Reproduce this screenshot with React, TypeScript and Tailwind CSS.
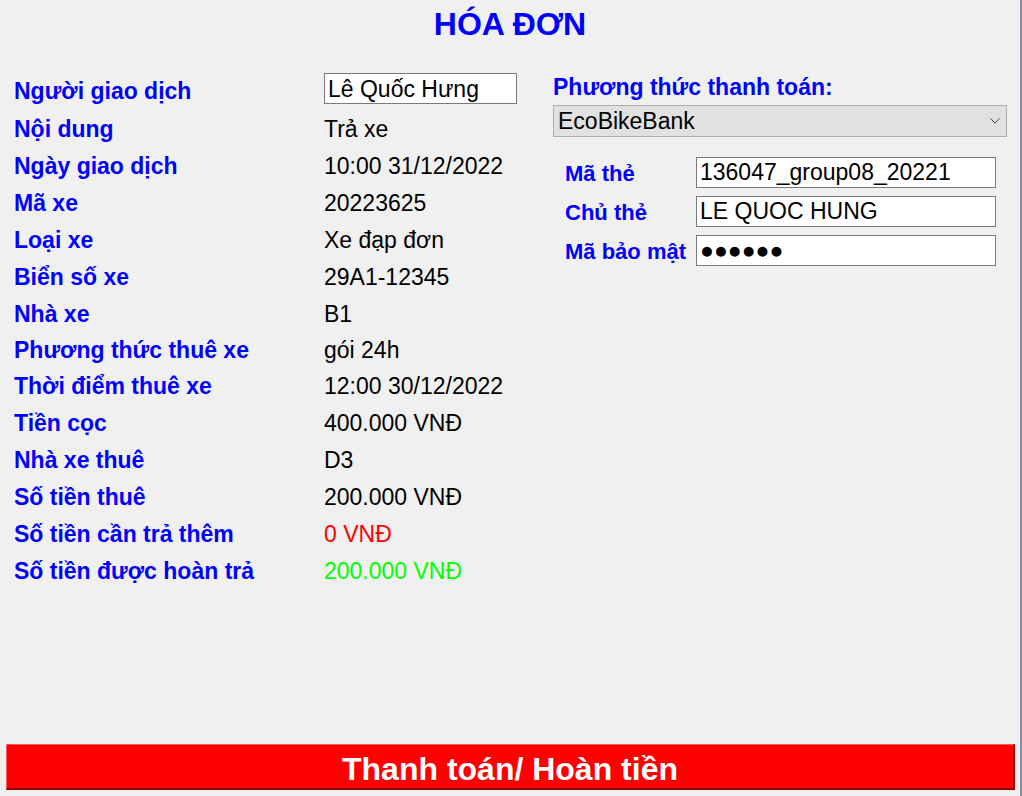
const rows: { label: string; value: string; color?: string; h?: string }[] = [
  { label: "Nội dung", value: "Trả xe" },
  { label: "Ngày giao dịch", value: "10:00 31/12/2022" },
  { label: "Mã xe", value: "20223625" },
  { label: "Loại xe", value: "Xe đạp đơn" },
  { label: "Biển số xe", value: "29A1-12345" },
  { label: "Nhà xe", value: "B1" },
  { label: "Phương thức thuê xe", value: "gói 24h", h: "short" },
  { label: "Thời điểm thuê xe", value: "12:00 30/12/2022" },
  { label: "Tiền cọc", value: "400.000 VNĐ" },
  { label: "Nhà xe thuê", value: "D3" },
  { label: "Số tiền thuê", value: "200.000 VNĐ" },
  { label: "Số tiền cần trả thêm", value: "0 VNĐ", color: "red" },
  { label: "Số tiền được hoàn trả", value: "200.000 VNĐ", color: "green" },
];

const InfoRow = ({ label, value, color, h }: (typeof rows)[number]) => {
  const rowClass =
    h === "short"
      ? "flex h-[35px] leading-[35px]"
      : "flex h-[37px] leading-[37px]";
  const valueClass =
    color === "red"
      ? "text-[23px] text-[#ff0000]"
      : color === "green"
      ? "text-[23px] text-[#00ff00]"
      : "text-[23px] text-black";
  return (
    <div className={rowClass}>
      <span className="w-[310px] shrink-0 text-[23px] font-bold text-[#0000ff]">
        {label}
      </span>
      <span className={valueClass}>{value}</span>
    </div>
  );
};

const CardField = ({ label, children }: { label: string; children: React.ReactNode }) => (
  <div className="flex h-[31px] items-center">
    <span className="w-[131px] shrink-0 pt-[1px] text-[22px] font-bold text-[#0000ff]">{label}</span>
    {children}
  </div>
);

const App = () => {
  return (
    <div className="flex h-[796px] w-[1022px] flex-col border-r-2 border-[#8e8e9a] bg-[#f0f0f0] font-['Liberation_Sans',Arial,sans-serif]">
      <h1 className="pt-[8px] text-center text-[32px] leading-[32px] font-bold text-[#0000ff]">
        HÓA ĐƠN
      </h1>

      <div className="mt-[33px] flex">
        {/* thông tin giao dịch */}
        <div className="ml-[14px] w-[503px]">
          <div className="flex h-[38px] leading-[36px]">
            <span className="w-[310px] shrink-0 text-[23px] font-bold text-[#0000ff]">
              Người giao dịch
            </span>
            <input
              readOnly
              defaultValue="Lê Quốc Hưng"
              className="h-[31px] w-[193px] border border-[#7a7a7a] bg-white px-[3px] text-[23px] text-black outline-none"
            />
          </div>
          {rows.map((r) => (
            <InfoRow key={r.label} {...r} />
          ))}
        </div>

        {/* thanh toán */}
        <div className="ml-[36px] w-[454px]">
          <div className="text-[23px] leading-[28px] font-bold text-[#0000ff]">
            Phương thức thanh toán:
          </div>
          <div className="mt-[4px] flex h-[32px] items-center justify-between border border-[#adadad] bg-[#e1e1e1] pl-[4px] pr-[6px] text-[23px] text-black">
            <span>EcoBikeBank</span>
            <svg width="10" height="6" viewBox="0 0 10 6" fill="none">
              <path d="M0.5 0.5 L5 5 L9.5 0.5" stroke="#444" strokeWidth="1" />
            </svg>
          </div>

          <div className="mt-[20px] flex flex-col gap-[8px] pl-[12px]">
            <CardField label="Mã thẻ">
              <input
                readOnly
                defaultValue="136047_group08_20221"
                className="h-[31px] w-[300px] border border-[#7a7a7a] bg-white px-[3px] text-[23px] text-black outline-none"
              />
            </CardField>
            <CardField label="Chủ thẻ">
              <input
                readOnly
                defaultValue="LE QUOC HUNG"
                className="h-[31px] w-[300px] border border-[#7a7a7a] bg-white px-[3px] text-[23px] text-black outline-none"
              />
            </CardField>
            <CardField label="Mã bảo mật">
              <div className="flex h-[31px] w-[300px] items-center border border-[#7a7a7a] bg-white px-[3px] text-[23px] text-black">
                ●●●●●●
              </div>
            </CardField>
          </div>
        </div>
      </div>

      <div className="flex-1" />

      <button className="mx-[6px] mb-[6px] h-[46px] w-[1009px] border-t border-l border-b-2 border-r-2 border-t-[#ff5a5a] border-l-[#ff5a5a] border-b-[#8b0000] border-r-[#8b0000] bg-[#ff0000] text-[32px] font-bold text-white">
        Thanh toán/ Hoàn tiền
      </button>
    </div>
  );
};

export default App;
